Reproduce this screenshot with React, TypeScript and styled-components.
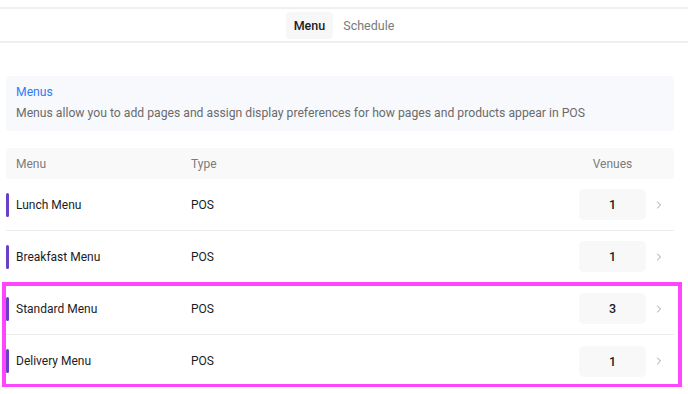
import React from "react";
import styled, { createGlobalStyle } from "styled-components";
import { ChevronRight } from "lucide-react";

const GlobalStyle = createGlobalStyle`
  * {
    box-sizing: border-box;
  }
  body {
    margin: 0;
    background: #ffffff;
    font-family: Roboto, "Liberation Sans", sans-serif;
    color: #1c1c1e;
  }
`;

const Page = styled.div`
  padding-top: 7px;
`;

const TabBar = styled.nav`
  display: flex;
  justify-content: center;
  align-items: center;
  gap: 2px;
  height: 36px;
  border-top: 2px solid #efefef;
  border-bottom: 2px solid #efefef;
`;

const Tab = styled.button<{ $active?: boolean }>`
  font-family: inherit;
  font-size: 12.5px;
  font-weight: ${({ $active }) => ($active ? 500 : 400)};
  color: ${({ $active }) => ($active ? "#1c1c1e" : "#7a7a7a")};
  background: ${({ $active }) => ($active ? "#f7f7f7" : "transparent")};
  border: none;
  border-radius: 4px;
  height: 27px;
  padding: 0 8px;
`;

const Content = styled.main`
  padding: 33px 14px 0 6px;
`;

const InfoBox = styled.section`
  background: #f7f9fd;
  border-radius: 4px;
  padding: 9px 10px 10px;
  height: 55px;
`;

const InfoTitle = styled.div`
  color: #2f7cf6;
  font-size: 12.2px;
  line-height: 15px;
`;

const InfoText = styled.p`
  margin: 6px 0 0;
  color: #6b6b6b;
  font-size: 12.2px;
  line-height: 15px;
`;

const Table = styled.div`
  margin-top: 17px;
`;

const HeaderRow = styled.div`
  display: grid;
  grid-template-columns: 175px 1fr 67px 28px;
  align-items: center;
  height: 31px;
  padding-left: 10px;
  background: #f9f9f9;
  border-radius: 4px;
  color: #7b7b7b;
  font-size: 12px;
`;

const HeaderCell = styled.div<{ $center?: boolean }>`
  text-align: ${({ $center }) => ($center ? "center" : "left")};
`;

const Row = styled.div`
  display: grid;
  grid-template-columns: 3px 7px 175px 1fr 67px 28px;
  align-items: center;
  height: 52px;
  border-bottom: 1px solid #ececec;
  font-size: 12px;

  &:last-child {
    border-bottom: none;
  }
`;

const Marker = styled.span`
  width: 3px;
  height: 24px;
  border-radius: 2px;
  background: #6b3ec6;
`;

const NameCell = styled.div`
  grid-column: 3;
`;

const TypeCell = styled.div`
  grid-column: 4;
`;

const VenueChip = styled.div`
  height: 31px;
  border-radius: 5px;
  background: #f8f8f8;
  display: flex;
  align-items: center;
  justify-content: center;
  font-size: 12.5px;
  font-weight: 500;
`;

const Chevron = styled.div`
  display: flex;
  justify-content: flex-end;
  padding-right: 9px;
  color: #a0a0a0;
`;

const Highlight = styled.div`
  position: relative;

  &::after {
    content: "";
    position: absolute;
    top: -1px;
    bottom: -1px;
    left: -4px;
    right: -8px;
    border: 4px solid #ff46ff;
    pointer-events: none;
  }
`;

type MenuItem = { name: string; type: string; venues: number };

const menus: MenuItem[] = [
  { name: "Lunch Menu", type: "POS", venues: 1 },
  { name: "Breakfast Menu", type: "POS", venues: 1 },
  { name: "Standard Menu", type: "POS", venues: 3 },
  { name: "Delivery Menu", type: "POS", venues: 1 },
];

const MenuRow = ({ item }: { item: MenuItem }) => (
  <Row>
    <Marker />
    <NameCell>{item.name}</NameCell>
    <TypeCell>{item.type}</TypeCell>
    <VenueChip>{item.venues}</VenueChip>
    <Chevron>
      <ChevronRight size={12} strokeWidth={2} />
    </Chevron>
  </Row>
);

const App = () => {
  return (
    <Page>
      <GlobalStyle />
      <TabBar>
        <Tab $active>Menu</Tab>
        <Tab>Schedule</Tab>
      </TabBar>
      <Content>
        <InfoBox>
          <InfoTitle>Menus</InfoTitle>
          <InfoText>
            Menus allow you to add pages and assign display preferences for how
            pages and products appear in POS
          </InfoText>
        </InfoBox>
        <Table>
          <HeaderRow>
            <HeaderCell>Menu</HeaderCell>
            <HeaderCell>Type</HeaderCell>
            <HeaderCell $center>Venues</HeaderCell>
            <HeaderCell />
          </HeaderRow>
          {menus.slice(0, 2).map((m) => (
            <MenuRow key={m.name} item={m} />
          ))}
          <Highlight>
            {menus.slice(2).map((m) => (
              <MenuRow key={m.name} item={m} />
            ))}
          </Highlight>
        </Table>
      </Content>
    </Page>
  );
};

export default App;
